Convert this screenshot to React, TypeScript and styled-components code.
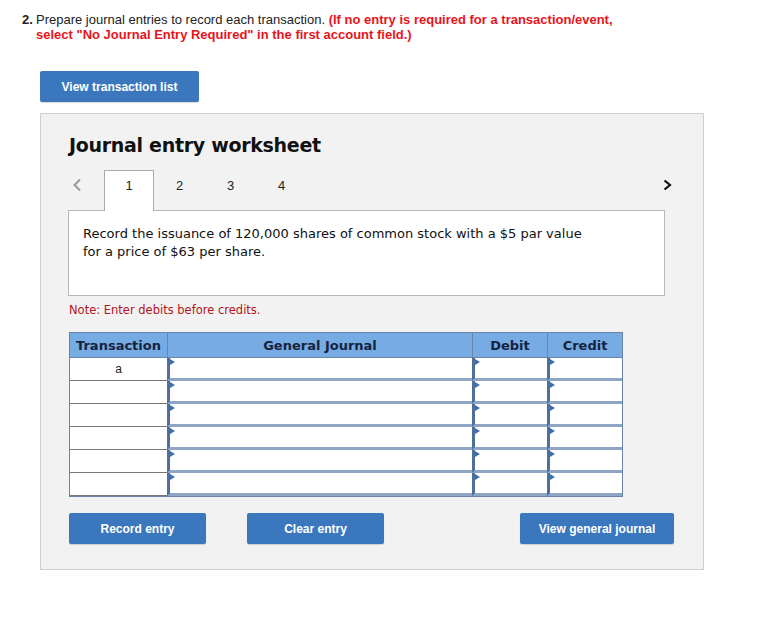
import React from "react";
import styled, { createGlobalStyle } from "styled-components";

const GlobalStyle = createGlobalStyle`
  body {
    margin: 0;
    background: #ffffff;
    font-family: Verdana, "DejaVu Sans", sans-serif;
  }
`;

const Page = styled.div`
  padding: 12px 0 40px 22px;
`;

const Instruction = styled.div`
  display: flex;
  font-family: "Liberation Sans", Arial, sans-serif;
  font-size: 13px;
  line-height: 15px;
  color: #222;
`;

const Num = styled.span`
  font-weight: 700;
  width: 14px;
  flex-shrink: 0;
`;

const InstructionText = styled.span`
  width: 590px;
`;

const Warn = styled.span`
  color: #e8141b;
  font-weight: 700;
`;

const BlueButton = styled.button<{ $w: number }>`
  width: ${(p) => p.$w}px;
  height: 31px;
  border: none;
  border-radius: 2px;
  background: #3a77bd;
  color: #fff;
  font-family: "Liberation Sans", Arial, sans-serif;
  font-weight: 700;
  font-size: 12px;
  padding: 0;
  cursor: pointer;
  box-shadow: 0 1px 1px rgba(0, 0, 0, 0.15);
`;

const TopButtonRow = styled.div`
  margin: 29px 0 0 18px;
`;

const Panel = styled.div`
  margin: 11px 0 0 18px;
  width: 634px;
  background: #f2f2f2;
  border: 1px solid #cfcfcf;
  padding: 20px 0 25px 28px;
`;

const Title = styled.h2`
  margin: 0;
  font-family: Verdana, "DejaVu Sans", sans-serif;
  font-size: 19px;
  font-weight: 700;
  color: #111;
  letter-spacing: -0.3px;
`;

const TabRow = styled.div`
  display: flex;
  align-items: flex-start;
  margin-top: 14px;
  width: 606px;
  height: 40px;
  position: relative;
  z-index: 1;
`;

const Arrow = styled.span<{ $right?: boolean }>`
  width: 35px;
  display: flex;
  justify-content: ${(p) => (p.$right ? "flex-end" : "flex-start")};
  padding: ${(p) => (p.$right ? "8px 3px 0 0" : "8px 0 0 3px")};
  box-sizing: border-box;
  color: ${(p) => (p.$right ? "#111" : "#999")};
`;

const Tab = styled.div<{ $active?: boolean }>`
  width: ${(p) => (p.$active ? 50 : 51)}px;
  height: 41px;
  box-sizing: border-box;
  display: flex;
  align-items: flex-start;
  justify-content: center;
  padding-top: 7px;
  font-family: "Liberation Sans", Arial, sans-serif;
  font-size: 13px;
  color: #222;
  background: ${(p) => (p.$active ? "#fff" : "transparent")};
  border: ${(p) => (p.$active ? "1px solid #aaa" : "1px solid transparent")};
  border-bottom: none;
`;

const Spacer = styled.div`
  flex: 1;
`;

const Prompt = styled.div`
  width: 597px;
  height: 86px;
  box-sizing: border-box;
  margin-left: -1px;
  background: #fff;
  border: 1px solid #b8b8b8;
  padding: 14px 14px;
  font-size: 13px;
  line-height: 18px;
  color: #111;
`;

const Note = styled.div`
  margin-top: 7px;
  font-size: 11.5px;
  color: #b3141b;
`;

const Grid = styled.div`
  margin-top: 15px;
  display: grid;
  grid-template-columns: 97px 305px 75px 75px;
  width: 554px;
  border: 1px solid #6b84a8;
  border-right-width: 2px;
  border-top: none;
  box-sizing: border-box;
`;

const Head = styled.div`
  height: 26px;
  display: flex;
  align-items: center;
  justify-content: center;
  background: #76abe4;
  border-top: 1px solid #6b84a8;
  border-left: 1px solid #6b84a8;
  border-bottom: 1px solid #6b84a8;
  font-size: 13px;
  font-weight: 700;
  color: #16233d;
  box-sizing: border-box;
  &:first-child {
    border-left: none;
  }
`;

const TxCell = styled.div`
  height: 23px;
  box-sizing: border-box;
  background: #fff;
  border-bottom: 1px solid #777;
  display: flex;
  align-items: center;
  justify-content: center;
  font-family: "Liberation Sans", Arial, sans-serif;
  font-size: 12px;
  color: #222;
`;

const InputCell = styled.div`
  position: relative;
  height: 23px;
  box-sizing: border-box;
  background: #fff;
  border-left: 3px solid #4e6f9c;
  border-bottom: 3px solid #8da6c6;
  &::before {
    content: "";
    position: absolute;
    left: 0;
    top: 1px;
    border-left: 5px solid #3d6fad;
    border-top: 3px solid transparent;
    border-bottom: 3px solid transparent;
  }
`;

const ButtonRow = styled.div`
  display: flex;
  gap: 41px;
  width: 605px;
  margin-top: 16px;
`;

const Chevron = ({ right }: { right?: boolean }) => (
  <svg width="10" height="14" viewBox="0 0 10 14">
    {right ? (
      <path d="M2.5 2.5 L8 7 L2.5 11.5" fill="none" stroke="currentColor" strokeWidth="2.2" />
    ) : (
      <path d="M8 1.5 L2.5 7 L8 12.5" fill="none" stroke="currentColor" strokeWidth="2" />
    )}
  </svg>
);

const rows = ["a", "", "", "", "", ""];

export default function App(): React.ReactElement {
  return (
    <>
      <GlobalStyle />
      <Page>
        <Instruction>
          <Num>2.</Num>
          <InstructionText>
            Prepare journal entries to record each transaction.{" "}
            <Warn>
              (If no entry is required for a transaction/event,
              <br />
              select "No Journal Entry Required" in the first account field.)
            </Warn>
          </InstructionText>
        </Instruction>
        <TopButtonRow>
          <BlueButton $w={159}>View transaction list</BlueButton>
        </TopButtonRow>
        <Panel>
          <Title>Journal entry worksheet</Title>
          <TabRow>
            <Arrow>
              <Chevron />
            </Arrow>
            <Tab $active>1</Tab>
            <Tab>2</Tab>
            <Tab>3</Tab>
            <Tab>4</Tab>
            <Spacer />
            <Arrow $right>
              <Chevron right />
            </Arrow>
          </TabRow>
          <Prompt>
            Record the issuance of 120,000 shares of common stock with a $5 par value
            <br />
            for a price of $63 per share.
          </Prompt>
          <Note>Note: Enter debits before credits.</Note>
          <Grid>
            <Head>Transaction</Head>
            <Head>General Journal</Head>
            <Head>Debit</Head>
            <Head>Credit</Head>
            {rows.map((r, i) => (
              <React.Fragment key={i}>
                <TxCell>{r}</TxCell>
                <InputCell />
                <InputCell />
                <InputCell />
              </React.Fragment>
            ))}
          </Grid>
          <ButtonRow>
            <BlueButton $w={137}>Record entry</BlueButton>
            <BlueButton $w={137}>Clear entry</BlueButton>
            <Spacer />
            <BlueButton $w={154}>View general journal</BlueButton>
          </ButtonRow>
        </Panel>
      </Page>
    </>
  );
}
